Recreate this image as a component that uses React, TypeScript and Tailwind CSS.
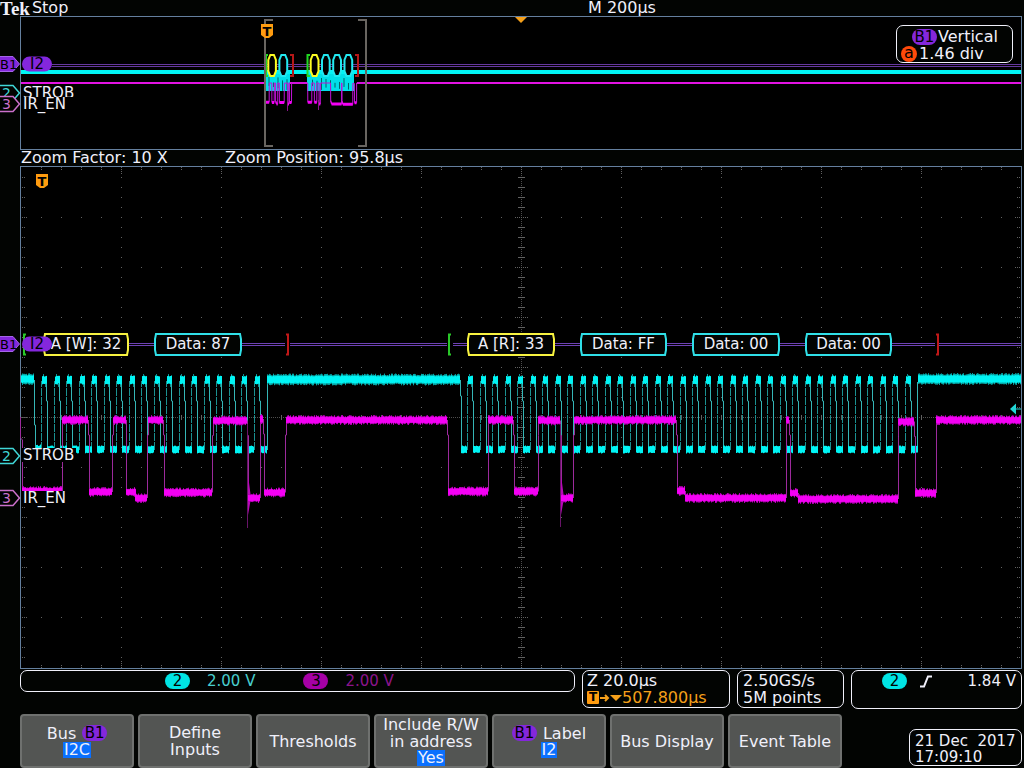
import type { ReactNode } from 'react';

type Segment = [from: number, to: number, level: number];

interface Packet {
  x: number;
  width: number;
  label: string;
  kind: 'address' | 'data';
}

const PURPLE = '#8427dc';
const CYAN = '#00f4f4';
const MAGENTA = '#f400f4';

const CLOCK_PERIOD = 12.5;

const packets: Packet[] = [
  { x: 43, width: 86, label: 'A [W]: 32', kind: 'address' },
  { x: 154, width: 88, label: 'Data: 87', kind: 'data' },
  { x: 467, width: 88, label: 'A [R]: 33', kind: 'address' },
  { x: 580, width: 87, label: 'Data: FF', kind: 'data' },
  { x: 692, width: 88, label: 'Data: 00', kind: 'data' },
  { x: 805, width: 87, label: 'Data: 00', kind: 'data' },
];

const starts = [24, 449];
const stops = [288, 938];

// Centre of every clock pulse in the two bursts
const pulses = [
  ...Array.from({ length: 18 }, (_, i) => Math.round(44.4 + i * CLOCK_PERIOD)),
  ...Array.from({ length: 36 }, (_, i) => Math.round(470 + i * CLOCK_PERIOD)),
];

const clockIdle: Segment[] = [
  [21, 34, 379],
  [267, 460, 379.5],
  [918, 1021, 379],
];

const dataLine: Segment[] = [
  [22, 62, 491],
  [62, 88, 420],
  [89, 112, 492],
  [113, 126, 420],
  [126, 136, 492],
  [135, 147, 498],
  [148, 163, 420],
  [164, 212, 492.5],
  [213, 247, 420.5],
  [248, 260, 498],
  [260, 263, 419],
  [264, 285, 492.5],
  [286, 447, 420],
  [448, 488, 491.5],
  [488, 513, 420],
  [514, 538, 491.5],
  [538, 560, 420.5],
  [561, 573, 498],
  [574, 676, 420],
  [677, 685, 491],
  [685, 786, 498],
  [786, 789, 420],
  [790, 798, 493],
  [798, 898, 499],
  [898, 914, 421.5],
  [915, 936, 493],
  [936, 1021, 420],
];

const noise = (n: number) => {
  const v = Math.sin(n * 12.9898) * 43758.5453;
  return v - Math.floor(v);
};

// One vertical stroke per column, with a ragged top and bottom
function band(from: number, to: number, y: number, half: number, jitter: number) {
  let d = '';
  for (let x = Math.round(from); x < to; x++) {
    const top = y - half - noise(x + y) * jitter;
    const bottom = y + half + noise(x * 3 + y) * jitter;
    d += `M${x + 0.5} ${top.toFixed(1)}V${bottom.toFixed(1)}`;
  }
  return d;
}

function Tag({ y, label, color, filled }: { y: number; label: string; color: string; filled?: boolean }) {
  return (
    <g>
      <path
        d={`M0 ${y - 7.5}H13L19.5 ${y}L13 ${y + 7.5}H0`}
        fill={filled ? PURPLE : '#020402'}
        stroke={filled ? '#a565e8' : color}
        strokeWidth={filled ? 1 : 1.5}
      />
      <text x={filled ? 0 : 2} y={y + 5} fill={filled ? '#000' : color} className={filled ? 'text-[13px]' : 'text-[14px]'}>
        {label}
      </text>
    </g>
  );
}

function BusName({ y }: { y: number }) {
  return (
    <g>
      <rect x="22" y={y - 7.5} width="30" height="15" rx="7.5" fill={PURPLE} />
      <text x="37" y={y + 5} textAnchor="middle" fill="#000" className="text-[15px]">I2</text>
    </g>
  );
}

function ChannelName({ y, width, children }: { y: number; width: number; children: ReactNode }) {
  return (
    <g>
      <rect x="22" y={y - 12} width={width} height="14" fill="#000" />
      <text x="23" y={y} fill="#f0f0fa" className="text-[15px]">{children}</text>
    </g>
  );
}

function TriggerMark({ x, y }: { x: number; y: number }) {
  return (
    <g>
      <path d={`M${x - 6} ${y - 7}H${x + 6}V${y + 4}L${x + 2} ${y + 7}H${x - 2}L${x - 6} ${y + 4}Z`} fill="#ff9c10" />
      <text x={x} y={y + 5} textAnchor="middle" fill="#000" className="text-[13px] font-bold">T</text>
    </g>
  );
}

function Overview() {
  const map = (x: number) => 265 + (x - 20) / 10;
  const mapY = (y: number) => 83 + (y - 420) * 0.27;
  const dataPath = dataLine
    .map(([from, to, y], i) => `${i ? 'L' : 'M'}${map(from).toFixed(1)} ${mapY(y).toFixed(1)}H${map(to).toFixed(1)}`)
    .join('');

  return (
    <svg viewBox="0 16 1024 134" className="block h-auto w-full" role="img" aria-label="Full record">
      <rect x="20.5" y="16.5" width="1001" height="133" fill="#000" stroke="#647f9e" />
      <path d="M515 17H527L521 23Z" fill="#f5a01a" />
      <path d="M52 64.500H1021M52 66.500H1021" stroke="#66389f" />
      <path d="M21 83H266M290 83H307M357 83H1021" stroke="#e313e3" strokeWidth="2" />

      {/* Clock bursts */}
      <rect x="266" y="73" width="24" height="18" fill="#00dfe8" />
      <rect x="307" y="73" width="47" height="18" fill="#00dfe8" />
      <path
        d={Array.from({ length: 14 }, (_, i) => `M${(i < 5 ? 269 : 290) + i * 4.5} ${77 + noise(i) * 6}V${85 + noise(i + 7) * 6}`).join('')}
        stroke="#000"
        opacity="0.55"
      />
      <path d="M21 72H1021" stroke={CYAN} strokeWidth="4" />

      <path d={dataPath} fill="none" stroke="#c312d8" />
      <path
        d={dataLine
          .filter(([, , y]) => y > 480)
          .map(([from, to, y]) => `M${map(from)} ${mapY(y)}H${map(to)}`)
          .join('')}
        stroke={MAGENTA}
        strokeWidth="3"
      />
      <path d="M287.500 100V111M318.500 100V110" stroke="#8b138b" />

      {packets.map((p) => {
        const left = Math.max(map(p.x), 267) + 1;
        const right = map(p.x + p.width);
        return (
          <path
            key={p.x}
            d={`M${left + 2} 55H${right - 2}L${right} 60V71L${right - 2} 76H${left + 2}L${left} 71V60Z`}
            fill="#000"
            stroke={p.kind === 'address' ? '#fdfb22' : '#22e8f0'}
            strokeWidth="2"
          />
        );
      })}
      <path d="M268 55H266V76H268M310 55H307.500V76H310" fill="none" stroke="#22d822" strokeWidth="2" />
      <path d="M290 55H293V76H290M355 55H358V76H355" fill="none" stroke="#b51818" strokeWidth="2" />

      <path d="M273 20H265V146H273M358 20H366V146H358" fill="none" stroke="#696560" strokeWidth="2" />
      <TriggerMark x={267} y={31} />

      <ChannelName y={98} width={54}>STROB</ChannelName>
      <ChannelName y={109} width={54}>IR_EN</ChannelName>
      <Tag y={64} label="B1" color={PURPLE} filled />
      <Tag y={93} label="2" color="#40d8d8" />
      <Tag y={104} label="3" color="#cb70cb" />
      <BusName y={64} />
    </svg>
  );
}

function Graticule() {
  let dots = '';
  const dot = (x: number, y: number) => {
    dots += `M${x} ${y + 0.5}h1`;
  };
  for (let x = 41; x < 1021; x += 20) {
    for (let y = 217; y < 660; y += 50) dot(x, y);
    const count = (x - 21) % 100 === 0 ? 4 : 2;
    for (let k = 0; k < count; k++) {
      dot(x, 167 + k * 2);
      dot(x, 667 - k * 2);
    }
    [-2, -1, 1, 2].forEach((k) => dot(x, 417 + k));
  }
  for (let y = 177; y < 667; y += 10) {
    for (let x = 121; x < 1000; x += 100) dot(x, y);
    const major = (y - 167) % 50 === 0;
    for (let k = 0; k < (major ? 3 : 2); k++) {
      dot(22 + k * 2, y);
      dot(1019 - k * 2, y);
    }
    const reach = major ? 6 : 3;
    for (let k = -reach; k <= reach; k += major ? 2 : 1) dot(521 + k, y);
  }
  return (
    <g stroke="#626262">
      <path d={dots} />
      <path d="M21 417.500H1021M521.500 167V668" strokeDasharray="1 1" opacity="0.8" />
    </g>
  );
}

function ClockTrace() {
  const low = pulses.map((c) => band(c + 3, c + 10, 449.5, 3, 1)).join('');
  const high = pulses.map((c) => band(c - 2, c + 3, 380, 3.5, 1)).join('');
  const tips = pulses.map((c) => `M${c - 0.5} 376V374M${c + 1.5} 384V387`).join('');
  return (
    <g>
      <path d={pulses.map((c) => `M${c - 2.5} 450V381`).join('')} stroke="#1b9090" strokeDasharray="8 1" />
      <path
        d={pulses.map((c) => `M${c + 2.5} 381V401H${c + 3.5}V450`).join('')}
        fill="none"
        stroke="#35b5b5"
      />
      <path d="M34.500 380V425H35.500V448M460.500 380V396H461.500V448M267.500 450V382M917.500 450V382" fill="none" stroke="#35b5b5" />
      <path d={tips} stroke="#148c8c" />
      <path d={clockIdle.map(([from, to, y]) => band(from, to, y, 4, 2)).join('')} stroke="#05a5a5" />
      <path d={low + high + band(36, 41, 449, 2.5, 2) + band(461, 467, 449.5, 3, 1)} stroke={CYAN} />
      <path d={clockIdle.map(([from, to, y]) => band(from, to, y, 3, 1)).join('')} stroke={CYAN} />
    </g>
  );
}

function DataTrace() {
  const edges = dataLine
    .slice(1)
    .map(([from, , y], i) => {
      const [, prevEnd, prevY] = dataLine[i];
      // Small steps go straight, full swings bend near the high level
      if (Math.abs(prevY - y) < 20) return `M${from + 0.5} ${prevY}V${y}`;
      const mid = Math.min(prevY, y) + 15;
      return `M${prevEnd + 0.5} ${prevY}V${mid}H${from + 0.5}V${y}`;
    })
    .join('');
  return (
    <g>
      <path d={`M20.500 417V438L22.500 440V490${edges}`} fill="none" stroke="#9c2a9c" />
      <path d="M247.500 424V528M560.500 424V527" stroke="#681468" />
      <path d="M248 475L251 498L248 515ZM561 475L564 498L561 515Z" fill="#b808b8" />
      <path d={dataLine.map(([from, to, y]) => band(from, to, y, 3, 2)).join('')} stroke="#b500b5" />
      <path d={dataLine.map(([from, to, y]) => band(from, to, y, 2.5, 1)).join('')} stroke={MAGENTA} />
    </g>
  );
}

function BusDecode() {
  return (
    <g>
      <path d="M52 343.500H285M290 343.500H447M453 343.500H935M939 343.500H1021M52 345.500H285M290 345.500H447M453 345.500H935M939 345.500H1021" stroke="#6d42b4" />
      {starts.map((x) => (
        <path key={x} d={`M${x + 2} 334.500H${x}V354.500H${x + 2}`} fill="none" stroke="#29c829" strokeWidth="2" />
      ))}
      {stops.map((x) => (
        <path key={x} d={`M${x - 2} 334.500H${x}V354.500H${x - 2}`} fill="none" stroke="#c01818" strokeWidth="2" />
      ))}
      {packets.map((p) => (
        <g key={p.x}>
          <path
            d={`M${p.x + 2} 334H${p.x + p.width - 2}L${p.x + p.width - 1} 339V350L${p.x + p.width - 2} 355H${p.x + 2}L${p.x + 1} 350V339Z`}
            fill="#020402"
            stroke={p.kind === 'address' ? '#f8f340' : '#30e0e8'}
            strokeWidth="2"
          />
          <text x={p.x + p.width / 2} y="349" textAnchor="middle" fill="#f0f0fa" className="text-[15px]">
            {p.label}
          </text>
        </g>
      ))}
    </g>
  );
}

function ZoomView() {
  return (
    <svg viewBox="0 166 1024 503" className="block h-auto w-full" role="img" aria-label="Zoomed waveforms">
      <rect x="20.5" y="166.5" width="1001" height="502" fill="#000" stroke="#647f9e" />
      <Graticule />
      <ClockTrace />
      <DataTrace />
      <BusDecode />
      <TriggerMark x={42} y={181} />
      <path d="M1010 409L1016 403.500V414.500ZM1015 408.500H1021V409.500H1015Z" fill="#22d5d5" />
      <ChannelName y={460} width={54}>STROB</ChannelName>
      <ChannelName y={503} width={54}>IR_EN</ChannelName>
      <Tag y={344} label="B1" color={PURPLE} filled />
      <Tag y={456} label="2" color="#40d8d8" />
      <Tag y={498} label="3" color="#cb70cb" />
      <BusName y={344} />
    </svg>
  );
}

function Pill({ className, children }: { className: string; children: ReactNode }) {
  return (
    <span className={`inline-block h-4 w-[25px] rounded-full text-center text-[15px] leading-4 text-black ${className}`}>
      {children}
    </span>
  );
}

function Choice({ children }: { children: ReactNode }) {
  return <span className="bg-[#0a70ff] px-px leading-4">{children}</span>;
}

function MenuButton({ children }: { children: ReactNode }) {
  return (
    <button
      type="button"
      className="flex h-[54px] flex-col items-center justify-center whitespace-nowrap rounded-[4px] border-2 border-[#6f716f] bg-[#535553] text-[16px] leading-[17px]"
    >
      {children}
    </button>
  );
}

export default function App() {
  return (
    <div className="min-h-screen bg-[#020402] font-['DejaVu_Sans',sans-serif] text-[#f0f0fa]">
      <header className="grid h-4 grid-cols-[588fr_436fr] text-[16px] leading-4">
        <div className="flex gap-[2px]">
          <span className="font-['Liberation_Serif',serif] text-[19px] font-bold leading-[18px]">Tek</span>
          <span>Stop</span>
        </div>
        <span>M 200µs</span>
      </header>

      <div className="relative">
        <Overview />
        <div className="absolute right-[11px] top-[9px] h-[38px] w-[117px] rounded-[7px] border border-[#f0f0fa] bg-[#020402] pt-[2px] text-[16px] leading-[17px]">
          <div className="flex items-center gap-px pl-[15px]">
            <Pill className="bg-[#8427dc]">B1</Pill>
            Vertical
          </div>
          <div className="flex items-center gap-[2px] pl-1">
            <span className="h-4 w-4 rounded-full bg-[#ff4a0a] text-center leading-[14px] text-black">a</span>
            1.46 div
          </div>
        </div>
      </div>

      <div className="grid h-4 grid-cols-[204fr_799fr] pl-[21px] text-[16px] leading-4">
        <span>Zoom Factor: 10 X</span>
        <span>Zoom Position: 95.8µs</span>
      </div>

      <ZoomView />

      <section className="mt-px grid grid-cols-[555fr_148fr_107fr_171fr] items-start gap-[7px] pl-5 pr-[2px] text-[15px] leading-[17px]">
        <div className="flex h-[22px] items-center rounded-[7px] border border-[#f0f0fa] pl-36">
          <Pill className="bg-[#00e4e4]">2</Pill>
          <span className="ml-[17px] text-[#48cfcf]">2.00 V</span>
          <Pill className="ml-[48px] bg-[#a500a5]">3</Pill>
          <span className="ml-[17px] text-[#8c148c]">2.00 V</span>
        </div>
        <div className="h-[38px] whitespace-nowrap rounded-[7px] border border-[#f0f0fa] pl-1 pt-px text-[16px]">
          <div>Z 20.0µs</div>
          <div className="flex items-center text-[#f5a01a]">
            <span className="h-[13px] w-3 rounded-[1px] bg-[#ff9c10] text-center text-[12px] font-bold leading-[13px] text-black">T</span>
            <svg viewBox="0 0 23 12" className="h-3 w-[23px]" aria-hidden="true">
              <path d="M1 6H9M6 3L9 6L6 9" fill="none" stroke="#f5a01a" strokeWidth="2" />
              <path d="M11 3H23L17 9Z" fill="#f5a01a" />
            </svg>
            507.800µs
          </div>
        </div>
        <div className="h-[38px] whitespace-nowrap rounded-[7px] border border-[#f0f0fa] pl-[5px] pt-px text-[16px]">
          <div>2.50GS/s</div>
          <div>5M points</div>
        </div>
        <div className="flex h-[39px] items-start rounded-[7px] border border-[#f0f0fa] pl-[30px] pr-[5px] pt-[2px]">
          <Pill className="bg-[#00e4e4]">2</Pill>
          <svg viewBox="0 0 12 13" className="ml-[13px] mt-[2px] h-[13px] w-3" aria-label="Rising edge">
            <path d="M0 11.500H4L8 1.500H12" fill="none" stroke="#f0f0fa" strokeWidth="2" />
          </svg>
          <span className="ml-auto">1.84 V</span>
        </div>
      </section>

      <footer className="mt-[5px] grid grid-cols-[822fr_180fr] pl-5 pr-[2px]">
        <nav className="grid grid-cols-7 gap-1" aria-label="Bus menu">
          <MenuButton>
            <span className="flex items-center gap-[6px]">
              Bus <Pill className="bg-[#8427dc]">B1</Pill>
            </span>
            <Choice>I2C</Choice>
          </MenuButton>
          <MenuButton>
            <span>Define</span>
            <span>Inputs</span>
          </MenuButton>
          <MenuButton>Thresholds</MenuButton>
          <MenuButton>
            <span>Include R/W</span>
            <span>in address</span>
            <Choice>Yes</Choice>
          </MenuButton>
          <MenuButton>
            <span className="flex items-center gap-[6px]">
              <Pill className="bg-[#8427dc]">B1</Pill> Label
            </span>
            <Choice>I2</Choice>
          </MenuButton>
          <MenuButton>Bus Display</MenuButton>
          <MenuButton>Event Table</MenuButton>
        </nav>
        <div className="mt-[15px] h-[37px] w-[113px] justify-self-end whitespace-pre rounded-[7px] border border-[#f0f0fa] pl-[5px] pt-[3px] text-[15px] leading-4">
          <div>21 Dec  2017</div>
          <div>17:09:10</div>
        </div>
      </footer>
    </div>
  );
}
